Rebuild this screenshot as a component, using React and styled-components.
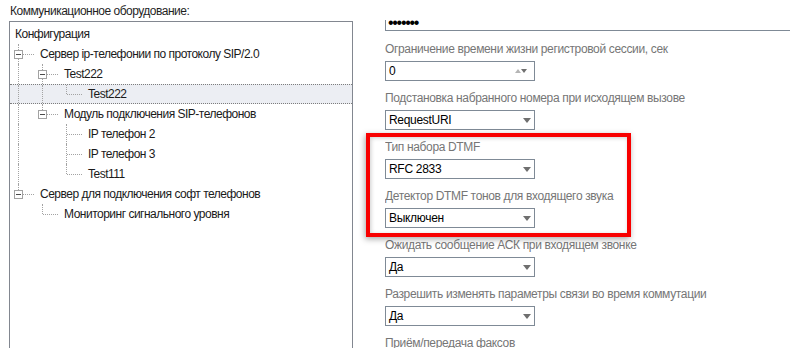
import React from "react";
import styled, { createGlobalStyle, css } from "styled-components";

const GlobalStyle = createGlobalStyle`
  html, body {
    margin: 0;
    padding: 0;
    background: #fff;
  }
  body {
    font-family: "Liberation Sans", Arial, sans-serif;
    font-size: 12px;
  }
`;

const Page = styled.div`
  position: relative;
  width: 790px;
  height: 348px;
  overflow: hidden;
  display: flex;
  padding-left: 9px;
  box-sizing: border-box;
`;

const LeftColumn = styled.div`
  width: 344px;
  flex-shrink: 0;
  display: flex;
  flex-direction: column;
`;

const Caption = styled.div`
  height: 21px;
  line-height: 22px;
  padding-left: 1px;
  color: #1f1f1f;
  letter-spacing: -0.5px;
  white-space: nowrap;
`;

const TreePanel = styled.div`
  flex: 1;
  border: 1px solid #828790;
  border-bottom: none;
  padding-top: 2px;
`;

const Row = styled.div`
  height: 20px;
  display: flex;
  align-items: center;
  box-sizing: border-box;
  padding-left: ${(p) => (p.$root ? "5px" : "0")};
  ${(p) =>
    p.$selected &&
    css`
      background: #eceef3;
      border-top: 1px dotted #7d7d7d;
      border-bottom: 1px dotted #7d7d7d;
    `}
`;

const Guide = styled.span`
  position: relative;
  flex: 0 0 24px;
  align-self: stretch;

  &::before {
    content: "";
    display: ${(p) => (p.$kind === "none" ? "none" : "block")};
    position: absolute;
    left: 8px;
    top: 0;
    bottom: ${(p) => (p.$kind === "elbow" ? "50%" : "0")};
    border-left: 1px dotted #a3a3a3;
  }

  &::after {
    content: "";
    display: ${(p) => (p.$kind === "tee" || p.$kind === "elbow" ? "block" : "none")};
    position: absolute;
    left: 9px;
    top: 50%;
    width: 15px;
    border-top: 1px dotted #a3a3a3;
  }
`;

const Expander = styled.span`
  position: absolute;
  z-index: 1;
  left: 4px;
  top: calc(50% - 4px);
  width: 9px;
  height: 9px;
  box-sizing: border-box;
  border: 1px solid #a2a2a2;
  background: #fff;

  &::after {
    content: "";
    position: absolute;
    left: 1px;
    right: 1px;
    top: 3px;
    height: 1px;
    background: #4a4a4a;
  }
`;

const NodeText = styled.span`
  margin-left: ${(p) => (p.$root ? "0" : "6px")};
  color: #1a1a1a;
  letter-spacing: -0.5px;
  white-space: nowrap;
`;

const RightColumn = styled.div`
  margin-left: 32px;
  margin-top: 20px;
  flex: 1;
  overflow: hidden;
`;

const FormStack = styled.div`
  margin-top: -9px;
  display: flex;
  flex-direction: column;
`;

const PasswordBox = styled.div`
  width: 430px;
  height: 20px;
  box-sizing: border-box;
  border: 1px solid #7f8a96;
  padding: 3px 0 0 2px;
  line-height: 16px;
  font-size: 16px;
  letter-spacing: -1.3px;
  color: #000;
  overflow: hidden;
`;

const Field = styled.div`
  display: flex;
  flex-direction: column;
  margin-top: ${(p) => (p.$first ? "11px" : "10px")};
`;

const FieldLabel = styled.div`
  line-height: 14px;
  height: 14px;
  color: #767676;
  letter-spacing: -0.35px;
  white-space: nowrap;
`;

const Combo = styled.div`
  position: relative;
  margin-top: 5px;
  width: 150px;
  height: 20px;
  box-sizing: border-box;
  border: 1px solid #7f8a96;
  padding-left: 3px;
  line-height: 18px;
  letter-spacing: -0.3px;
  color: #000;
  background: #fff;
`;

const DropArrow = styled.span`
  position: absolute;
  right: 3px;
  top: 7px;
  width: 0;
  height: 0;
  border-left: 4.5px solid transparent;
  border-right: 4.5px solid transparent;
  border-top: 5px solid #6f6f6f;
`;

const SpinArrows = styled.span`
  position: absolute;
  right: 7px;
  top: 7px;
  display: flex;
`;

const SpinUp = styled.span`
  width: 0;
  height: 0;
  border-left: 3.5px solid transparent;
  border-right: 3.5px solid transparent;
  border-bottom: 4px solid #b5b5b5;
`;

const SpinDown = styled.span`
  width: 0;
  height: 0;
  border-left: 3.5px solid transparent;
  border-right: 3.5px solid transparent;
  border-top: 4px solid #707070;
`;

const Highlight = styled.div`
  position: absolute;
  left: 366px;
  top: 133px;
  width: 265px;
  height: 104px;
  box-sizing: border-box;
  border: 4px solid #f80000;
  box-shadow: -1px 2px 6px rgba(0, 0, 0, 0.35), inset 1px 1px 4px rgba(0, 0, 0, 0.2);
  pointer-events: none;
`;

const tree = [
  { text: "Сервер ip-телефонии по протоколу SIP/2.0", guides: ["tee"], open: true },
  { text: "Test222", guides: ["pipe", "tee"], open: true },
  { text: "Test222", guides: ["pipe", "pipe", "elbow"], selected: true },
  { text: "Модуль подключения SIP-телефонов", guides: ["pipe", "elbow"], open: true },
  { text: "IP телефон 2", guides: ["pipe", "none", "tee"] },
  { text: "IP телефон 3", guides: ["pipe", "none", "tee"] },
  { text: "Test111", guides: ["pipe", "none", "elbow"] },
  { text: "Сервер для подключения софт телефонов", guides: ["elbow"], open: true },
  { text: "Мониторинг сигнального уровня", guides: ["none", "elbow"] },
];

const fields = [
  { label: "Ограничение времени жизни регистровой сессии, сек", value: "0", spin: true },
  { label: "Подстановка набранного номера при исходящем вызове", value: "RequestURI" },
  { label: "Тип набора DTMF", value: "RFC 2833" },
  { label: "Детектор DTMF тонов для входящего звука", value: "Выключен" },
  { label: "Ожидать сообщение АСК при входящем звонке", value: "Да" },
  { label: "Разрешить изменять параметры связи во время коммутации", value: "Да" },
  { label: "Приём/передача факсов" },
];

function TreeRow({ node }) {
  const last = node.guides.length - 1;
  return (
    <Row $selected={node.selected}>
      {node.guides.map((kind, i) => (
        <Guide key={i} $kind={kind}>
          {i === last && node.open && <Expander />}
        </Guide>
      ))}
      <NodeText>{node.text}</NodeText>
    </Row>
  );
}

export default function App() {
  return (
    <>
      <GlobalStyle />
      <Page>
        <LeftColumn>
          <Caption>Коммуникационное оборудование:</Caption>
          <TreePanel>
            <Row $root>
              <NodeText $root>Конфигурация</NodeText>
            </Row>
            {tree.map((node, i) => (
              <TreeRow key={i} node={node} />
            ))}
          </TreePanel>
        </LeftColumn>

        <RightColumn>
          <FormStack>
            <PasswordBox>•••••••</PasswordBox>
            {fields.map((f, i) => (
              <Field key={i} $first={i === 0}>
                <FieldLabel>{f.label}</FieldLabel>
                {f.value && (
                  <Combo>
                    {f.value}
                    {f.spin ? (
                      <SpinArrows>
                        <SpinUp />
                        <SpinDown />
                      </SpinArrows>
                    ) : (
                      <DropArrow />
                    )}
                  </Combo>
                )}
              </Field>
            ))}
          </FormStack>
        </RightColumn>

        <Highlight />
      </Page>
    </>
  );
}
